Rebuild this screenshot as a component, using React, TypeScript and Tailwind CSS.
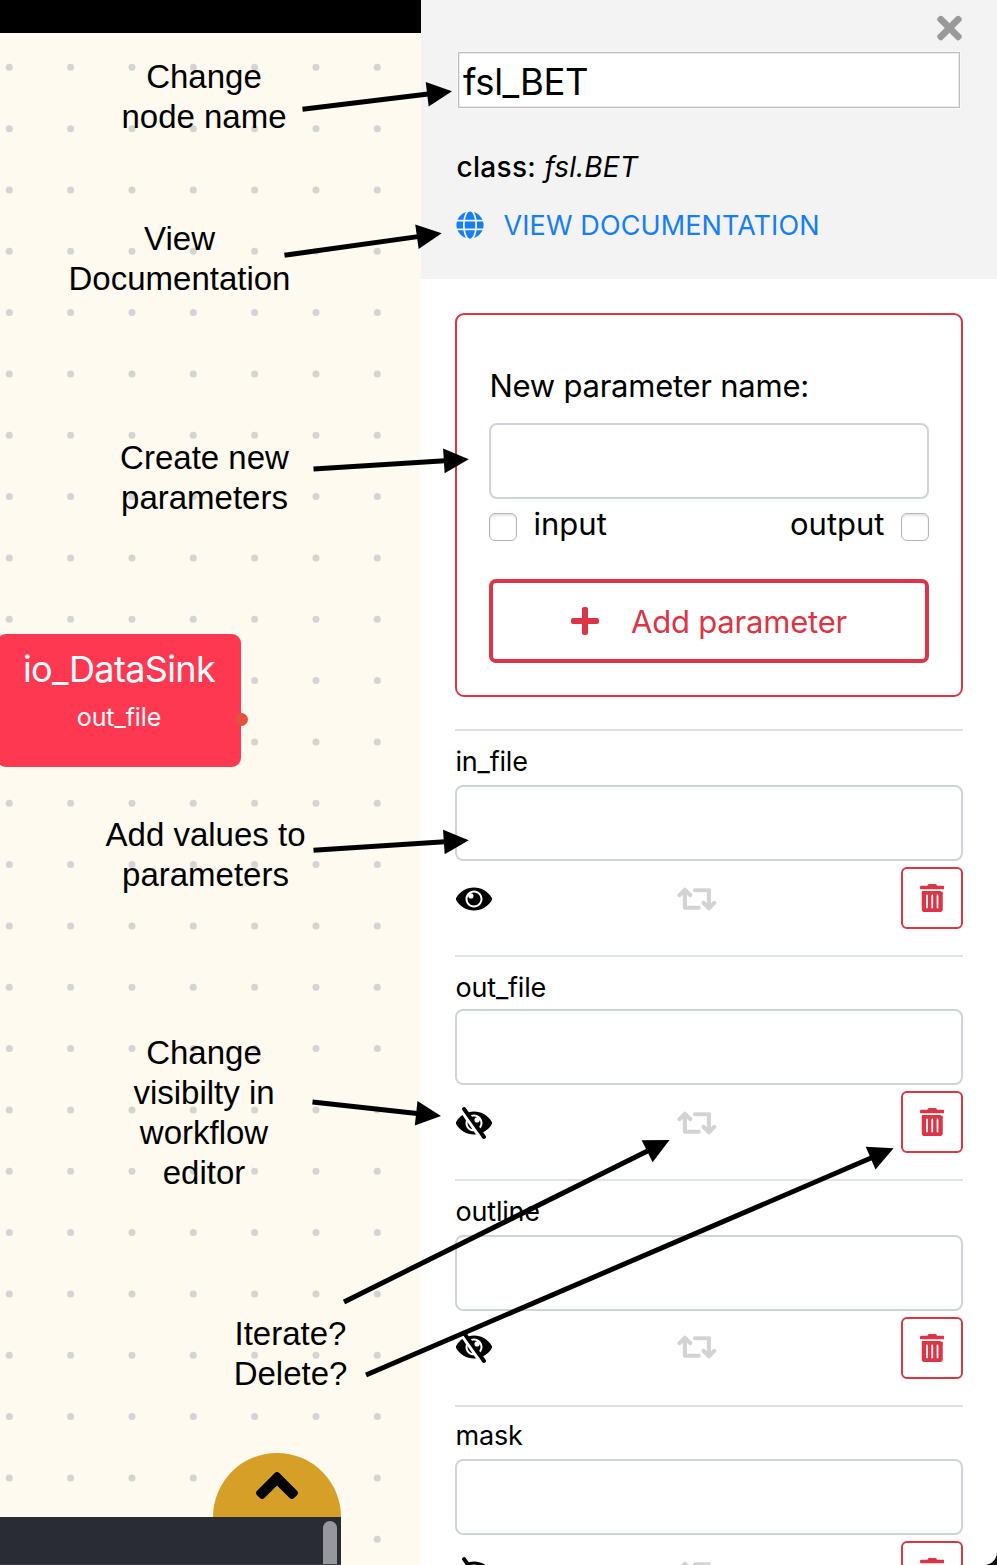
import { FaAngleUp, FaGlobe, FaPlus, FaTimes } from "react-icons/fa";

type Point = [number, number];

interface Note {
  lines: string[];
  place: string;
}

interface Param {
  name: string;
  visible: boolean;
  label: string;
  actions: string;
}

const notes: Note[] = [
  { lines: ["Change", "node name"], place: "left-[104px] top-[57px]" },
  { lines: ["View", "Documentation"], place: "left-[79.5px] top-[219px]" },
  { lines: ["Create new", "parameters"], place: "left-[104.5px] top-[438px]" },
  { lines: ["Add values to", "parameters"], place: "left-[105.5px] top-[815px]" },
  { lines: ["Change", "visibilty in", "workflow", "editor"], place: "left-[104px] top-[1033px]" },
  { lines: ["Iterate?", "Delete?"], place: "left-[190.5px] top-[1314px]" },
];

const arrows: [Point, Point][] = [
  [[302.5, 109.2], [452, 91.2]],
  [[284.5, 255.3], [441.7, 233.3]],
  [[313.5, 469], [468.8, 459.3]],
  [[313.5, 850.3], [468.8, 840.3]],
  [[312.5, 1102], [441, 1116]],
  [[344, 1302], [669.5, 1140]],
  [[366, 1375], [893.6, 1148.3]],
];

const params: Param[] = [
  { name: "in_file", visible: true, label: "h-[54px] pt-[11px]", actions: "pt-[2px]" },
  { name: "out_file", visible: false, label: "h-[52px] pt-[11px]", actions: "pt-[2px]" },
  { name: "outline", visible: false, label: "h-[54px] pt-[11px]", actions: "pb-[2px]" },
  { name: "mask", visible: false, label: "h-[52px] pt-[9px]", actions: "pt-[2px]" },
];

function EyeIcon() {
  return (
    <svg viewBox="0 0 576 512" className="ml-[0.5px] h-[32px] w-[36px]" fill="currentColor">
      <path d="M569.354 231.631C512.969 135.949 407.81 72 288 72 168.14 72 63.004 135.994 6.646 231.631a47.999 47.999 0 0 0 0 48.739C63.031 376.051 168.19 440 288 440c119.86 0 224.996-63.994 281.354-159.631a47.997 47.997 0 0 0 0-48.738zM288 392c-75.162 0-136-60.827-136-136 0-75.162 60.826-136 136-136 75.162 0 136 60.826 136 136 0 75.162-60.826 136-136 136zm104-136c0 57.438-46.562 104-104 104s-104-46.562-104-104c0-17.708 4.431-34.379 12.236-48.973l-.001.032c0 23.651 19.173 42.823 42.824 42.823s42.824-19.173 42.824-42.823c0-23.651-19.173-42.824-42.824-42.824l-.032.001C253.621 156.431 270.292 152 288 152c57.438 0 104 46.562 104 104z" />
    </svg>
  );
}

function EyeSlashIcon() {
  return (
    <svg viewBox="0 0 576 512" className="ml-[0.5px] h-[32px] w-[36px]" fill="currentColor">
      <path d="M286.693 391.984l32.579 46.542A333.958 333.958 0 0 1 288 440C168.19 440 63.031 376.051 6.646 280.369a47.999 47.999 0 0 1 0-48.739c24.023-40.766 56.913-75.775 96.024-102.537l57.077 81.539C154.736 224.82 152 240.087 152 256c0 74.736 60.135 135.282 134.693 135.984zm282.661-111.615c-31.667 53.737-78.747 97.46-135.175 125.475l.011.015 41.47 59.2c7.6 10.86 4.96 25.82-5.9 33.42l-13.11 9.18c-10.86 7.6-25.82 4.96-33.42-5.9L100.34 46.94c-7.6-10.86-4.96-25.82 5.9-33.42l13.11-9.18c10.86-7.6 25.82-4.96 33.42 5.9l51.038 72.617C230.68 75.776 258.905 72 288 72c119.81 0 224.969 63.949 281.354 159.631a48.002 48.002 0 0 1 0 48.738zM424 256c0-75.174-60.838-136-136-136-17.939 0-35.056 3.473-50.729 9.772l19.299 27.058c25.869-8.171 55.044-6.163 80.4 7.41h-.03c-23.65 0-42.82 19.17-42.82 42.82 0 23.626 19.147 42.82 42.82 42.82 23.65 0 42.82-19.17 42.82-42.82v-.03c18.462 34.49 16.312 77.914-8.25 110.95v.01l19.314 27.061C411.496 321.2 424 290.074 424 256zM262.014 356.727l-77.53-110.757c-5.014 52.387 29.314 98.354 77.53 110.757z" />
    </svg>
  );
}

function IterateIcon() {
  return (
    <svg
      viewBox="0 0 40 26"
      className="h-[26px] w-[40px] text-[#d3d3d3]"
      fill="none"
      stroke="currentColor"
      strokeWidth={4.1}
      strokeLinecap="round"
      strokeLinejoin="round"
    >
      <path d="M2.6 9.200L7.900 3.700L13.200 9.200M7.900 4.500V21.700H21.800" />
      <path d="M37.200 16.800L31.900 22.300L26.600 16.800M31.900 21.500V4.300H18" />
    </svg>
  );
}

function TrashIcon() {
  return (
    <svg viewBox="0 0 448 512" className="mb-px h-[28px] w-[24.5px]" fill="currentColor">
      <path
        fillRule="evenodd"
        d="M0 84V56c0-13.300 10.700-24 24-24h112l9.400-18.700c4-8.200 12.300-13.300 21.400-13.300h114.300c9.100 0 17.400 5.100 21.500 13.300L312 32h112c13.300 0 24 10.700 24 24v28c0 6.600-5.400 12-12 12H12C5.400 96 0 90.600 0 84zM416 140v324c0 26.500-21.500 48-48 48H80c-26.500 0-48-21.500-48-48V140c0-6.600 5.400-12 12-12h328c6.600 0 12 5.400 12 12zM144 208c0-8.800-7.200-16-16-16s-16 7.200-16 16v224c0 8.800 7.200 16 16 16s16-7.200 16-16V208zM240 208c0-8.800-7.200-16-16-16s-16 7.200-16 16v224c0 8.800 7.200 16 16 16s16-7.200 16-16V208zM336 208c0-8.800-7.200-16-16-16s-16 7.200-16 16v224c0 8.800 7.200 16 16 16s16-7.200 16-16V208z"
      />
    </svg>
  );
}

function Arrow({ from, to }: { from: Point; to: Point }) {
  const length = Math.hypot(to[0] - from[0], to[1] - from[1]);
  const ux = (to[0] - from[0]) / length;
  const uy = (to[1] - from[1]) / length;
  const bx = to[0] - 25 * ux;
  const by = to[1] - 25 * uy;
  const half = 12.3;
  return (
    <g>
      <line x1={from[0]} y1={from[1]} x2={bx + ux} y2={by + uy} stroke="black" strokeWidth={5} />
      <polygon
        points={`${to[0]},${to[1]} ${bx - half * uy},${by + half * ux} ${bx + half * uy},${by - half * ux}`}
      />
    </g>
  );
}

function CheckBox() {
  return (
    <span className="mt-[14px] size-[28px] rounded-[6px] border border-[#b4b4b4] bg-white shadow-[inset_0_2px_2px_#e4e4e4]" />
  );
}

function Grid() {
  const columns = Array.from({ length: 7 }, (_, i) => 9.3 + i * 61.33);
  const rows = Array.from({ length: 25 }, (_, i) => 34.3 + i * 61.33);
  return (
    <svg className="absolute inset-0 h-[1532px] w-[421px]" fill="#d4d4d4">
      {rows.map((y) => columns.map((x) => <circle key={`${x}-${y}`} cx={x} cy={y} r={3.5} />))}
    </svg>
  );
}

function Canvas() {
  return (
    <div className="flex w-[421px] flex-none flex-col">
      <div className="h-[33px] bg-black" />
      <div className="relative flex-1 overflow-hidden bg-[#fffaef]">
        <Grid />
        <div className="absolute left-[-3px] top-[601px] flex h-[133px] w-[244px] flex-col items-center rounded-[9px] bg-[#ff3852] text-white">
          <div className="mt-[13px] text-[36px] leading-[44px] tracking-[-0.65px]">io_DataSink</div>
          <div className="mt-[6px] text-[25px] leading-[40px] tracking-[-0.1px]">out_file</div>
          <span className="absolute right-[-7px] top-[79px] size-[13px] rounded-full bg-[#e5503f]" />
        </div>
        <div className="absolute bottom-0 left-0 w-[341px]">
          <div className="ml-auto flex h-[64px] w-[128px] items-center justify-center overflow-hidden rounded-t-full bg-[#d69f27] text-black">
            <FaAngleUp className="h-[67px] w-[42px] flex-none" />
          </div>
          <div className="flex h-[48px] justify-end overflow-hidden border-b border-[#3d4049] bg-[#292c35] pr-[4px] pt-[4px]">
            <div className="h-[60px] w-[14px] rounded-t-full bg-[#97989b]" />
          </div>
        </div>
      </div>
    </div>
  );
}

function ParamRow({ param }: { param: Param }) {
  return (
    <div className="flex-none border-t-2 border-[#dee2e6]">
      <div className={`${param.label} pl-[0.5px] text-[27px] leading-[40px] tracking-[-0.2px]`}>{param.name}</div>
      <input className="block h-[76px] w-full rounded-[8px] border-2 border-[#ced4da] bg-white" />
      <div className="mt-[6px] flex h-[62px] items-center justify-between">
        <div className={`flex h-[62px] flex-1 items-center ${param.actions}`}>
          <div className="w-[222px]">{param.visible ? <EyeIcon /> : <EyeSlashIcon />}</div>
          <IterateIcon />
        </div>
        <button className="flex size-[62px] items-center justify-center rounded-[6px] border-2 border-[#dc3545] text-[#dc3545]">
          <TrashIcon />
        </button>
      </div>
      <div className="h-[26px]" />
    </div>
  );
}

function NodePanel() {
  return (
    <div className="flex w-[576px] flex-none flex-col overflow-hidden rounded-br-[13px] bg-white">
      <div className="h-[279px] flex-none bg-[#f3f3f3] pl-[35px] pr-[35px] pt-[10px]">
        <div className="flex h-[36px] justify-end">
          <FaTimes className="h-[36px] w-[25px] text-[#999999]" />
        </div>
        <input
          defaultValue="fsl_BET"
          className="ml-[2px] mt-[6px] block h-[56px] w-[502px] border border-[#bdbdbd] bg-white pl-[4px] pt-[4px] text-[36.5px] leading-[48px] tracking-[-0.4px] shadow-[0_0_0_1px_#f9f9f9,inset_0_0_0_1px_#ececec]"
        />
        <div className="mt-[39px] pl-[0.5px] text-[28px] leading-[41px]">
          <span className="font-medium tracking-[0.3px]">class:</span>{" "}
          <span className="ml-[0.5px] italic tracking-[0.1px]">fsl.BET</span>
        </div>
        <div className="mt-[18px] flex items-center text-[#147efb]">
          <FaGlobe className="-mt-[2px] size-[28px]" />
          <span className="ml-[19.5px] text-[27px] leading-[40px] tracking-[0.1px]">VIEW DOCUMENTATION</span>
        </div>
      </div>
      <div className="flex flex-1 flex-col overflow-hidden pl-[34px] pr-[34px] pt-[34px]">
        <div className="mb-[32px] h-[384px] flex-none rounded-[9px] border-2 border-[#dc3545] px-[32px] pt-[50px]">
          <div className="pl-[0.5px] text-[31px] leading-[42px] tracking-[-0.25px]">New parameter name:</div>
          <input className="mt-[16px] block h-[76px] w-full rounded-[8px] border-2 border-[#ced4da] bg-white" />
          <div className="flex justify-between text-[31px] leading-[50px]">
            <div className="flex gap-[16.5px]">
              <CheckBox />
              <span>input</span>
            </div>
            <div className="flex gap-[16.5px]">
              <span>output</span>
              <CheckBox />
            </div>
          </div>
          <button className="mt-[30px] flex h-[84px] w-full items-center justify-center rounded-[7px] border-4 border-[#dc3545] text-[#dc3545]">
            <FaPlus className="h-[32px] w-[28px]" />
            <span className="ml-[32px] mt-[2px] text-[31px] leading-[44px] tracking-[-0.2px]">Add parameter</span>
          </button>
        </div>
        {params.map((param) => (
          <ParamRow key={param.name} param={param} />
        ))}
      </div>
    </div>
  );
}

export default function App() {
  return (
    <div className="relative flex h-[1565px] w-[997px] overflow-hidden bg-black font-['Inter',sans-serif] text-black">
      <Canvas />
      <NodePanel />
      {notes.map((note) => (
        <div
          key={note.lines.join(" ")}
          className={`absolute w-[200px] text-center font-['Liberation_Sans',sans-serif] text-[33px] leading-[40px] ${note.place}`}
        >
          {note.lines.map((line) => (
            <div key={line} className="-mx-8 whitespace-nowrap">
              {line}
            </div>
          ))}
        </div>
      ))}
      <svg className="pointer-events-none absolute inset-0 h-[1565px] w-[997px]">
        {arrows.map(([from, to]) => (
          <Arrow key={from.join()} from={from} to={to} />
        ))}
      </svg>
    </div>
  );
}
